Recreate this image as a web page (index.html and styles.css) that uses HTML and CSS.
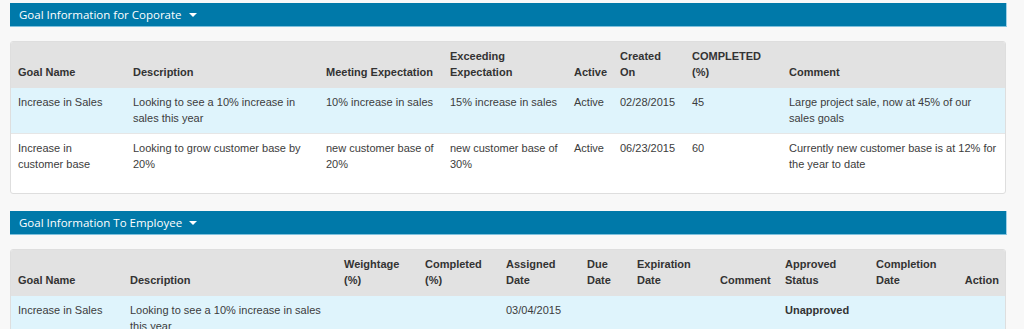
FILE: index.html
```html
<!DOCTYPE html>
<html>
<head>
<meta charset="utf-8">
<link rel="stylesheet" href="styles.css">
</head>
<body>
<div class="page">
  <div class="bar"><span class="bar-title">Goal Information for Coporate</span><span class="caret"></span></div>
  <div class="panel panel-1">
    <table class="grid">
      <colgroup>
        <col class="c115"><col class="c193"><col class="c124"><col class="c124"><col class="c46"><col class="c72"><col class="c97"><col class="c225">
      </colgroup>
      <thead>
        <tr>
          <th>Goal Name</th>
          <th>Description</th>
          <th>Meeting Expectation</th>
          <th>Exceeding Expectation</th>
          <th>Active</th>
          <th>Created On</th>
          <th>COMPLETED (%)</th>
          <th>Comment</th>
        </tr>
      </thead>
      <tbody>
        <tr class="hl">
          <td>Increase in Sales</td>
          <td>Looking to see a 10% increase in sales this year</td>
          <td>10% increase in sales</td>
          <td>15% increase in sales</td>
          <td>Active</td>
          <td>02/28/2015</td>
          <td>45</td>
          <td>Large project sale, now at 45% of our sales goals</td>
        </tr>
        <tr>
          <td>Increase in customer base</td>
          <td>Looking to grow customer base by 20%</td>
          <td>new customer base of 20%</td>
          <td>new customer base of 30%</td>
          <td>Active</td>
          <td>06/23/2015</td>
          <td>60</td>
          <td>Currently new customer base is at 12% for the year to date</td>
        </tr>
      </tbody>
    </table>
  </div>

  <div class="bar bar-2"><span class="bar-title">Goal Information To Employee</span><span class="caret"></span></div>
  <div class="panel panel-2">
    <table class="grid">
      <colgroup>
        <col class="c112"><col class="c214"><col class="c81"><col class="c81"><col class="c81"><col class="c50"><col class="c83"><col class="c65"><col class="c91"><col class="c72"><col class="c66">
      </colgroup>
      <thead>
        <tr>
          <th>Goal Name</th>
          <th>Description</th>
          <th>Weightage (%)</th>
          <th>Completed (%)</th>
          <th>Assigned Date</th>
          <th>Due Date</th>
          <th>Expiration Date</th>
          <th class="right">Comment</th>
          <th>Approved Status</th>
          <th>Completion Date</th>
          <th class="right">Action</th>
        </tr>
      </thead>
      <tbody>
        <tr class="hl">
          <td>Increase in Sales</td>
          <td>Looking to see a 10% increase in sales this year</td>
          <td></td>
          <td></td>
          <td>03/04/2015</td>
          <td></td>
          <td></td>
          <td></td>
          <td class="strong">Unapproved</td>
          <td></td>
          <td></td>
        </tr>
      </tbody>
    </table>
  </div>
</div>
</body>
</html>
```

FILE: styles.css
```css
html, body {
  margin: 0;
  padding: 0;
  background: #f8f8f8;
}

.page {
  padding: 3px 0 0 10px;
  width: 997px;
  display: flex;
  flex-direction: column;
}

.bar {
  height: 24px;
  background: #0079a9;
  box-sizing: border-box;
  border-right: 1px solid #9fd0e6;
  border-bottom: 1px solid #7fc0dc;
  display: flex;
  align-items: center;
  padding-left: 9px;
  font-family: "Open Sans", sans-serif;
  font-size: 11.5px;
  color: #ffffff;
}

.bar-2 {
  margin-top: 17px;
}

.caret {
  width: 0;
  height: 0;
  margin-left: 7px;
  margin-top: 1px;
  border-left: 4px solid transparent;
  border-right: 4px solid transparent;
  border-top: 4px solid #ffffff;
}

.panel {
  margin-top: 14px;
  width: 996px;
  box-sizing: border-box;
  background: #ffffff;
  border: 1px solid #dedede;
  border-radius: 3px;
  overflow: hidden;
}

.panel-1 {
  padding-bottom: 14px;
}

.grid {
  width: 100%;
  border-collapse: collapse;
  table-layout: fixed;
  font-family: "Liberation Sans", Arial, sans-serif;
  font-size: 11px;
  color: #333333;
}

.grid th {
  background: #e2e2e2;
  font-weight: bold;
  text-align: left;
  vertical-align: bottom;
  line-height: 16px;
  padding: 6px 8px 8px 7px;
  color: #333333;
}

.grid td {
  vertical-align: top;
  line-height: 16px;
  padding: 6px 8px 7px 7px;
  border-top: 1px solid #e6e6e6;
  color: #3c3c3c;
}

.grid tr.hl td {
  background: #dff4fc;
  border-top: none;
}

.grid .right {
  text-align: right;
}

.grid .strong {
  font-weight: bold;
  color: #333333;
}

.c115 { width: 115px; }
.c193 { width: 193px; }
.c124 { width: 124px; }
.c46 { width: 46px; }
.c72 { width: 72px; }
.c97 { width: 97px; }
.c225 { width: 225px; }
.c112 { width: 112px; }
.c214 { width: 214px; }
.c81 { width: 81px; }
.c50 { width: 50px; }
.c83 { width: 83px; }
.c65 { width: 65px; }
.c91 { width: 91px; }
.c66 { width: 66px; }
```
